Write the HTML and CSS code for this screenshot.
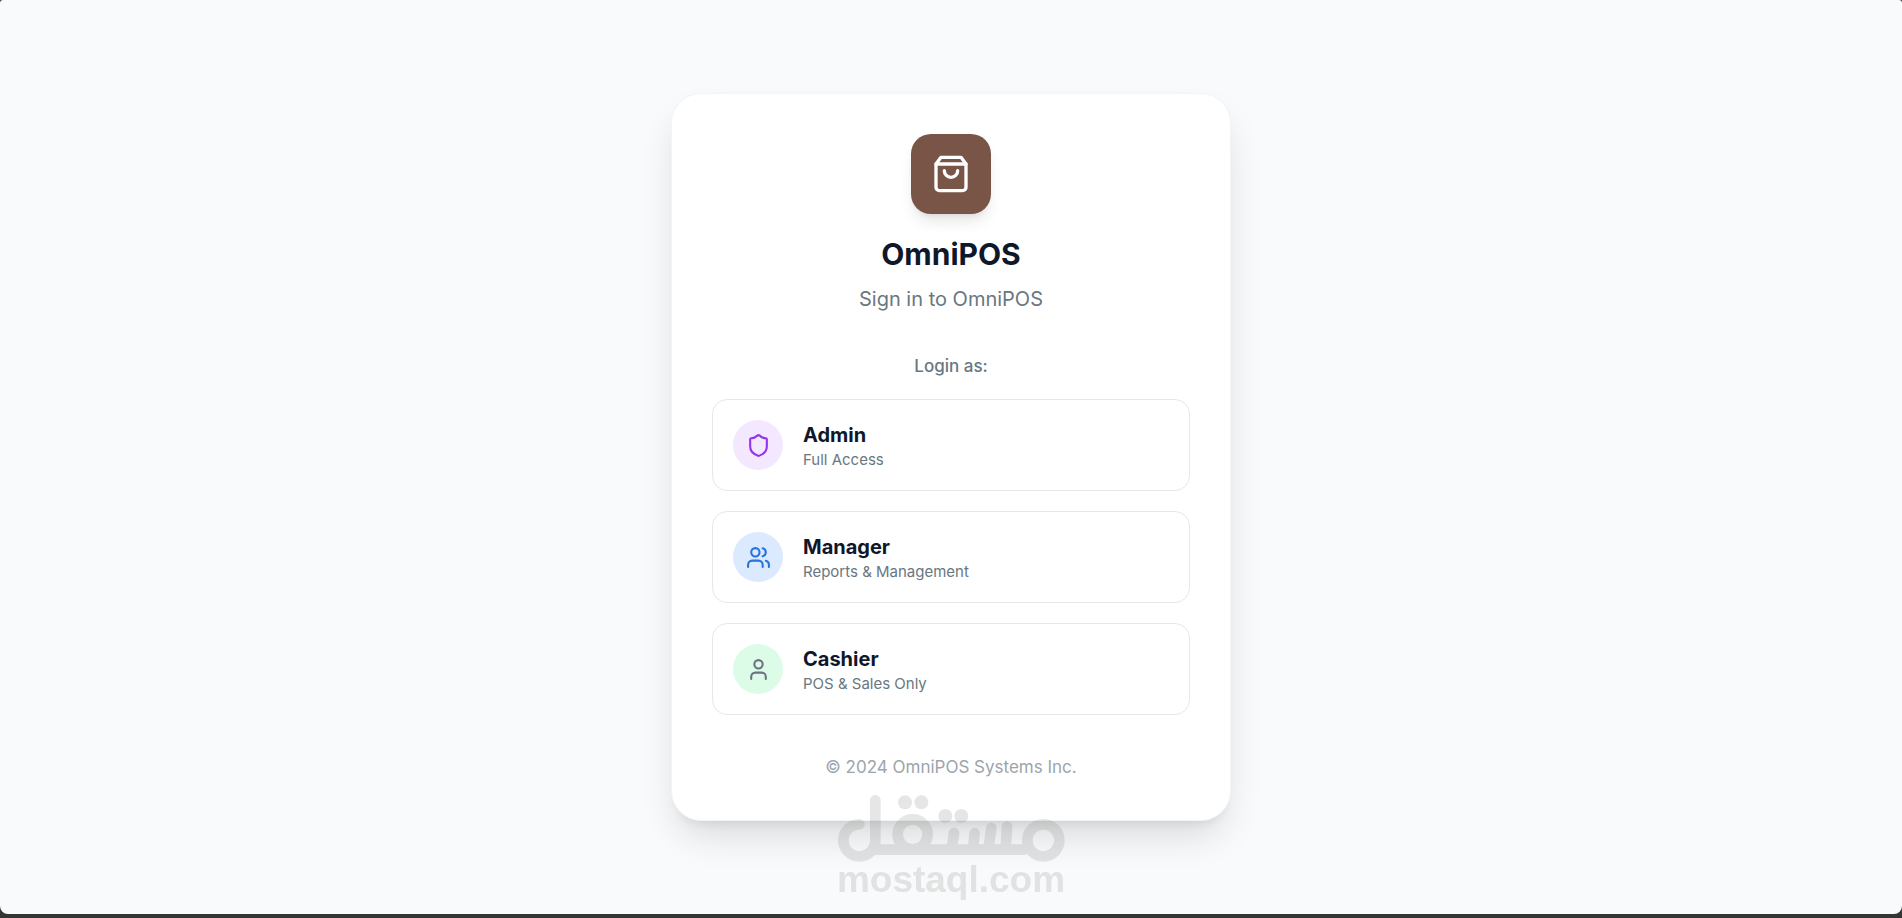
FILE: index.html
```
<!DOCTYPE html>
<html lang="en">

<head>
  <meta charset="UTF-8">
  <meta name="viewport" content="width=device-width, initial-scale=1.0">
  <title>OmniPOS</title>
  <link rel="stylesheet" href="styles.css">
</head>

<body>
  <main class="page">
    <section class="card">
      <header class="brand">
        <div class="logo">
          <svg viewBox="0 0 24 24">
            <path d="M6 2 3 6v14a2 2 0 0 0 2 2h14a2 2 0 0 0 2-2V6l-3-4Z" />
            <path d="M3 6h18" />
            <path d="M16 10a4 4 0 0 1-8 0" />
          </svg>
        </div>
        <h1>OmniPOS</h1>
        <p>Sign in to OmniPOS</p>
      </header>

      <p class="label" id="login-label">Login as:</p>
      <div class="roles" role="group" aria-labelledby="login-label">
        <button type="button" class="role">
          <span class="avatar admin">
            <svg viewBox="0 0 24 24">
              <path d="M20 13c0 5-3.500 7.500-7.660 8.950a1 1 0 0 1-.67-.01C7.500 20.500 4 18 4 13V6a1 1 0 0 1 1-1c2 0 4.500-1.200 6.240-2.720a1.170 1.170 0 0 1 1.520 0C14.510 3.810 17 5 19 5a1 1 0 0 1 1 1z" />
            </svg>
          </span>
          <span class="info">
            <span class="name">Admin</span>
            <span class="desc">Full Access</span>
          </span>
        </button>
        <button type="button" class="role">
          <span class="avatar manager">
            <svg viewBox="0 0 24 24">
              <path d="M16 21v-2a4 4 0 0 0-4-4H6a4 4 0 0 0-4 4v2" />
              <circle cx="9" cy="7" r="4" />
              <path d="M22 21v-2a4 4 0 0 0-3-3.870" />
              <path d="M16 3.130a4 4 0 0 1 0 7.750" />
            </svg>
          </span>
          <span class="info">
            <span class="name">Manager</span>
            <span class="desc">Reports &amp; Management</span>
          </span>
        </button>
        <button type="button" class="role">
          <span class="avatar cashier">
            <svg viewBox="0 0 24 24">
              <path d="M19 21v-2a4 4 0 0 0-4-4H9a4 4 0 0 0-4 4v2" />
              <circle cx="12" cy="7" r="4" />
            </svg>
          </span>
          <span class="info">
            <span class="name">Cashier</span>
            <span class="desc">POS &amp; Sales Only</span>
          </span>
        </button>
      </div>

      <footer class="copyright">© 2024 OmniPOS Systems Inc.</footer>
    </section>
  </main>

  <div class="watermark">
    <svg viewBox="0 0 684 201">
      <path d="M67 88a48 48 0 1 0 48 48V16M115 164H560" />
      <circle cx="227" cy="118" r="45" />
      <circle cx="619" cy="136" r="48" />
      <path d="M351 114 344 164M413 115 408 164M463 99 454 164M510 95 506 164" />
      <g class="dots">
        <circle cx="204" cy="22" r="21" />
        <circle cx="253" cy="22" r="21" />
        <circle cx="325" cy="63" r="21" />
        <circle cx="373" cy="63" r="21" />
      </g>
    </svg>
    <span>mostaql.com</span>
  </div>
</body>

</html>
```
FILE: styles.css
```
* {
  padding: 0;
  margin: 0;
  box-sizing: border-box;
}

body {
  background: #333535;
  font-family: Inter, "Liberation Sans", sans-serif;
  color: #0f172a;
}

.page {
  min-height: calc(100vh - 4px);
  margin-bottom: 4px;
  padding: 20px;
  display: flex;
  justify-content: center;
  align-items: center;
  background: #f9fafb;
  border-radius: 3px 3px 8px 8px;
}

.card {
  width: 100%;
  max-width: 560px;
  padding: 40px;
  background: #fff;
  border: solid 1px #f3f4f6;
  border-radius: 30px;
  box-shadow: 0 20px 38px -8px rgba(0, 0, 0, 0.14), 0 8px 10px -6px rgba(0, 0, 0, 0.08);
  text-align: center;
}

svg {
  fill: none;
  stroke: currentColor;
  stroke-width: 2;
  stroke-linecap: round;
  stroke-linejoin: round;
}

.brand {
  margin-bottom: 40px;
}

.logo {
  width: 80px;
  height: 80px;
  margin: 0 auto 20px;
  display: flex;
  justify-content: center;
  align-items: center;
  color: #fff;
  background: #795548;
  border-radius: 20px;
  box-shadow: 0 10px 15px -3px rgba(0, 0, 0, 0.1), 0 4px 6px -4px rgba(0, 0, 0, 0.1);
}

.logo svg {
  width: 40px;
  height: 40px;
}

h1 {
  font-size: 30px;
  line-height: 40px;
  font-weight: 700;
}

.brand p {
  margin-top: 10px;
  font-size: 20px;
  line-height: 30px;
  color: #697780;
}

.label {
  margin-bottom: 20px;
  font-size: 17px;
  line-height: 25px;
  font-weight: 500;
  color: #697780;
}

.roles {
  display: flex;
  flex-direction: column;
  gap: 20px;
}

.role {
  padding: 20px;
  display: flex;
  align-items: center;
  gap: 20px;
  font-family: inherit;
  color: inherit;
  text-align: left;
  background: #fff;
  border: solid 1px #e5e7e8;
  border-radius: 15px;
  cursor: pointer;
}

.role:hover {
  background: #f9fafb;
}

.avatar {
  width: 50px;
  height: 50px;
  display: flex;
  justify-content: center;
  align-items: center;
  border-radius: 50%;
}

.avatar svg {
  width: 25px;
  height: 25px;
}

.admin {
  color: #9333ea;
  background: #f3e8ff;
}

.manager {
  color: #2872dc;
  background: #dbeafe;
}

.cashier {
  color: #6b7280;
  background: #dcfce7;
}

.info {
  display: flex;
  flex-direction: column;
}

.name {
  font-size: 20px;
  line-height: 30px;
  font-weight: 700;
}

.desc {
  font-size: 15px;
  line-height: 20px;
  color: #697780;
}

.copyright {
  margin-top: 40px;
  font-size: 17px;
  line-height: 25px;
  color: #9ba5ac;
}

/* stamp laid over the bottom edge of the card */
.watermark {
  position: fixed;
  left: 0;
  right: 0;
  bottom: 20px;
  display: flex;
  flex-direction: column;
  align-items: center;
  color: #808080;
  opacity: 0.2;
  pointer-events: none;
}

.watermark svg {
  width: 228px;
  height: 67px;
  stroke-width: 32;
}

.watermark .dots {
  fill: currentColor;
  stroke: none;
}

.watermark span {
  font: bold 37px/36px "Liberation Sans", sans-serif;
}
```
